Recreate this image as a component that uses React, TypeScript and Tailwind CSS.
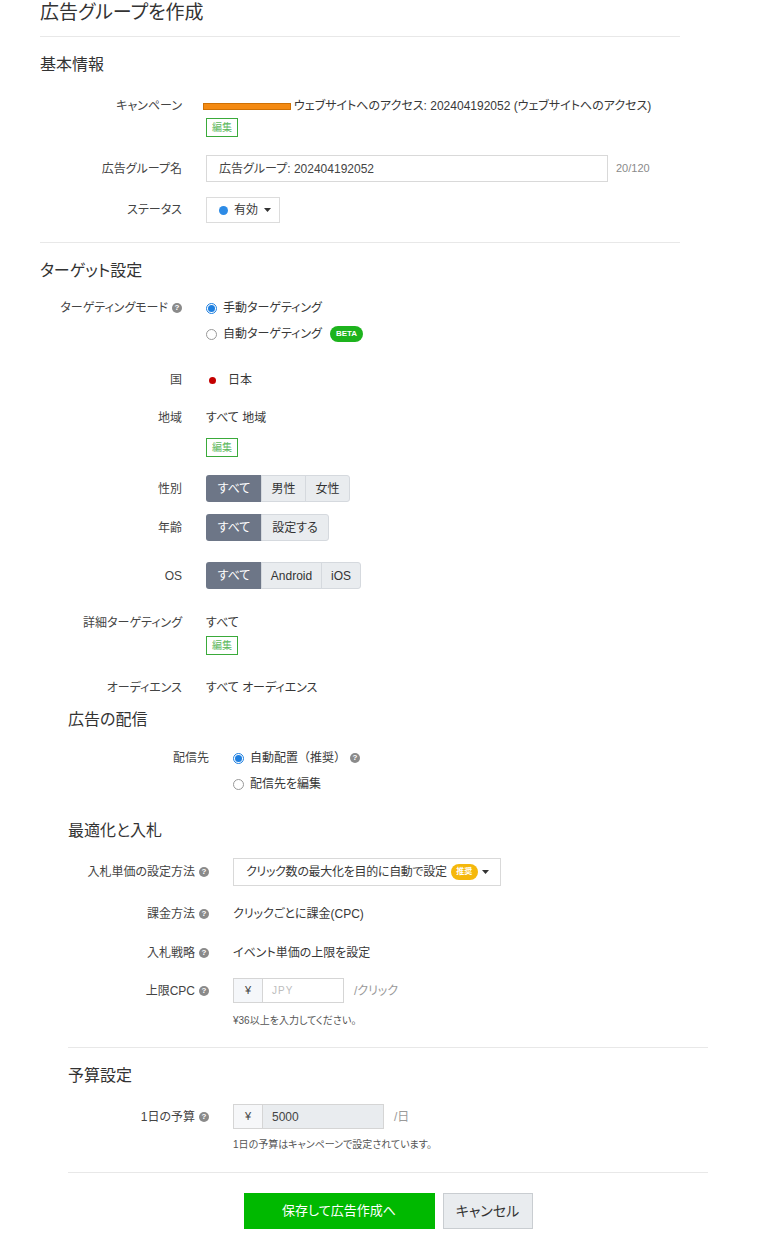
import React from 'react';

const Help = () => (
  <span className="inline-flex w-[10px] h-[10px] shrink-0 rounded-full bg-[#8a8a8a] text-white text-[8px] font-bold leading-none items-center justify-center ml-[4px]">
    ?
  </span>
);

const Caret = () => (
  <svg width="7" height="4" viewBox="0 0 7 4" className="inline-block">
    <path d="M0 0h7L3.5 4z" fill="#333" />
  </svg>
);

const EditButton = () => (
  <div className="w-[32px] h-[19px] border border-[#3aaa3a] text-[#5cb85c] text-[10px] leading-[17px] text-center bg-white">
    編集
  </div>
);

const Radio = ({ checked }: { checked?: boolean }) =>
  checked ? (
    <span className="inline-flex w-[11px] h-[11px] shrink-0 rounded-full border border-[#1e7fe0] items-center justify-center bg-white">
      <span className="w-[7px] h-[7px] rounded-full bg-[#1e7fe0]" />
    </span>
  ) : (
    <span className="inline-block w-[11px] h-[11px] shrink-0 rounded-full border border-[#999] bg-white" />
  );

type RowProps = {
  label: string;
  help?: boolean;
  labelW: string;
  children: React.ReactNode;
  className?: string;
  labelClass?: string;
  center?: boolean;
};

const Row = ({ label, help, labelW, children, className = '', labelClass = '', center }: RowProps) => (
  <div className={`flex gap-[24px] ${center ? 'items-center' : 'items-start'} ${className}`}>
    <div className={`${labelW} shrink-0 flex items-center justify-end text-[#444] leading-[18px] ${labelClass}`}>
      <span>{label}</span>
      {help && <Help />}
    </div>
    <div className="flex-1 min-w-0">{children}</div>
  </div>
);

const Segment = ({ items }: { items: { t: string; w: string }[] }) => (
  <div className="flex h-[27px]">
    {items.map((it, i) => (
      <div
        key={it.t}
        className={`${it.w} flex items-center justify-center ${
          i === 0
            ? 'bg-[#6d7687] text-white rounded-l-[3px]'
            : 'bg-[#e9ecef] text-[#333] border border-[#d5d9de] -ml-px'
        } ${i === items.length - 1 ? 'rounded-r-[3px]' : ''}`}
      >
        {it.t}
      </div>
    ))}
  </div>
);

export default function App() {
  const L1 = 'w-[142px]';
  const L2 = 'w-[141px]';
  return (
    <div className="min-h-screen bg-white text-[12px] text-[#383838] font-['Liberation_Sans','Noto_Sans_CJK_JP',sans-serif] [font-feature-settings:'palt'] pb-[30px]">
      {/* top block */}
      <div className="ml-[40px] w-[640px]">
        <div className="h-[37px] border-b border-[#e8e8e8]">
          <h1 className="text-[19px] leading-[24px] pt-px text-[#333]">広告グループを作成</h1>
        </div>

        <h2 className="mt-[16px] text-[16px] leading-[24px] text-[#333]">基本情報</h2>

        <Row label="キャンペーン" labelW={L1} className="mt-[20px]">
          <div className="flex items-center -ml-[3px] leading-[18px] whitespace-nowrap">
            <span className="inline-block w-[88px] h-[7px] bg-[#f48a12] border border-[#cf7104]" />
            <span className="ml-[3px]">ウェブサイトへのアクセス: 202404192052 (ウェブサイトへのアクセス)</span>
          </div>
          <div className="mt-[3px]">
            <EditButton />
          </div>
        </Row>

        <Row label="広告グループ名" labelW={L1} center className="mt-[18px]">
          <div className="flex items-center">
            <div className="w-[402px] h-[27px] border border-[#d9d9d9] flex items-center pl-[12px] text-[#444]">
              広告グループ: 202404192052
            </div>
            <span className="ml-[8px] text-[11px] text-[#8a8a8a]">20/120</span>
          </div>
        </Row>

        <Row label="ステータス" labelW={L1} center className="mt-[15px]">
          <div className="w-[74px] h-[26px] border border-[#dcdcdc] flex items-center pl-[12px] gap-[6px]">
            <span className="w-[9px] h-[9px] rounded-full bg-[#2d8be6]" />
            <span>有効</span>
            <Caret />
          </div>
        </Row>

        <div className="mt-[19px] border-t border-[#e8e8e8]" />

        <h2 className="mt-[16px] text-[16px] leading-[24px] text-[#333]">ターゲット設定</h2>

        <Row label="ターゲティングモード" help labelW={L1} className="mt-[16px]">
          <div className="flex items-center gap-[6px] leading-[18px]">
            <Radio checked />
            <span>手動ターゲティング</span>
          </div>
          <div className="flex items-center gap-[6px] leading-[18px] mt-[8px]">
            <Radio />
            <span>自動ターゲティング</span>
            <span className="ml-[2px] h-[16px] px-[6px] rounded-full bg-[#1db31d] text-white text-[8px] font-bold flex items-center">
              BETA
            </span>
          </div>
        </Row>

        <Row label="国" labelW={L1} className="mt-[28px]">
          <div className="flex items-center gap-[12px] leading-[18px] pl-[3px]">
            <span className="w-[7px] h-[7px] rounded-full bg-[#c40000]" />
            <span>日本</span>
          </div>
        </Row>

        <Row label="地域" labelW={L1} className="mt-[20px]">
          <div className="leading-[18px]">すべて 地域</div>
          <div className="mt-[11px]">
            <EditButton />
          </div>
        </Row>

        <Row label="性別" labelW={L1} center className="mt-[18px]">
          <Segment
            items={[
              { t: 'すべて', w: 'w-[56px]' },
              { t: '男性', w: 'w-[45px]' },
              { t: '女性', w: 'w-[45px]' },
            ]}
          />
        </Row>

        <Row label="年齢" labelW={L1} center className="mt-[12px]">
          <Segment
            items={[
              { t: 'すべて', w: 'w-[56px]' },
              { t: '設定する', w: 'w-[68px]' },
            ]}
          />
        </Row>

        <Row label="OS" labelW={L1} center className="mt-[21px]">
          <Segment
            items={[
              { t: 'すべて', w: 'w-[56px]' },
              { t: 'Android', w: 'w-[61px]' },
              { t: 'iOS', w: 'w-[40px]' },
            ]}
          />
        </Row>

        <Row label="詳細ターゲティング" labelW={L1} className="mt-[25px]">
          <div className="leading-[18px]">すべて</div>
          <div className="mt-[4px]">
            <EditButton />
          </div>
        </Row>

        <Row label="オーディエンス" labelW={L1} className="mt-[24px]">
          <div className="leading-[18px]">すべて オーディエンス</div>
        </Row>
      </div>

      {/* lower block */}
      <div className="ml-[68px] w-[640px]">
        <h2 className="mt-[11px] text-[16px] leading-[24px] text-[#333]">広告の配信</h2>

        <Row label="配信先" labelW={L2} className="mt-[17px]">
          <div className="flex items-center gap-[6px] leading-[18px]">
            <Radio checked />
            <span className="flex items-center [font-feature-settings:normal]">
              自動配置（推奨）
              <Help />
            </span>
          </div>
          <div className="flex items-center gap-[6px] leading-[18px] mt-[8px]">
            <Radio />
            <span>配信先を編集</span>
          </div>
        </Row>

        <h2 className="mt-[26px] text-[16px] leading-[24px] text-[#333]">最適化と入札</h2>

        <Row label="入札単価の設定方法" help labelW={L2} center className="mt-[15px]">
          <div className="w-[268px] h-[28px] border border-[#d9d9d9] flex items-center pl-[12px] pr-[11px] whitespace-nowrap">
            <span className="tracking-[-0.3px]">クリック数の最大化を目的に自動で設定</span>
            <span className="ml-[4px] h-[16px] w-[27px] shrink-0 rounded-full bg-[#f5b80c] text-white text-[8px] font-bold flex items-center justify-center">
              推奨
            </span>
            <span className="ml-auto flex">
              <Caret />
            </span>
          </div>
        </Row>

        <Row label="課金方法" help labelW={L2} className="mt-[19px]">
          <div className="leading-[18px]">クリックごとに課金(CPC)</div>
        </Row>

        <Row label="入札戦略" help labelW={L2} className="mt-[21px]">
          <div className="leading-[18px]">イベント単価の上限を設定</div>
        </Row>

        <Row label="上限CPC" help labelW={L2} labelClass="mt-[4px]" className="mt-[16px]">
          <div className="flex items-center">
            <div className="w-[111px] h-[25px] border border-[#d5d5d5] flex">
              <div className="w-[29px] bg-[#f5f7fa] border-r border-[#d5d5d5] flex items-center justify-center text-[11px] text-[#444]">
                ¥
              </div>
              <div className="flex-1 flex items-center pl-[9px] text-[10px] tracking-[1px] text-[#bdbdbd]">JPY</div>
            </div>
            <span className="ml-[10px] text-[#9a9a9a]">/クリック</span>
          </div>
          <div className="mt-[11px] text-[10px] leading-[14px] text-[#555]">¥36以上を入力してください。</div>
        </Row>

        <div className="mt-[19px] border-t border-[#e8e8e8]" />

        <h2 className="mt-[16px] text-[16px] leading-[24px] text-[#333]">予算設定</h2>

        <Row label="1日の予算" help labelW={L2} center className="mt-[16px]">
          <div className="flex items-center">
            <div className="w-[151px] h-[25px] border border-[#d5d5d5] flex">
              <div className="w-[29px] bg-[#f6f7f9] border-r border-[#d5d5d5] flex items-center justify-center text-[11px] text-[#444]">
                ¥
              </div>
              <div className="flex-1 bg-[#e9ecef] flex items-center pl-[9px] text-[#444]">5000</div>
            </div>
            <span className="ml-[10px] text-[#9a9a9a]">/日</span>
          </div>
        </Row>
        <div className="ml-[165px] mt-[9px] text-[10px] leading-[14px] text-[#555]">
          1日の予算はキャンペーンで設定されています。
        </div>

        <div className="mt-[20px] border-t border-[#e8e8e8]" />

        <div className="mt-[20px] flex justify-center gap-[8px]">
          <button className="w-[191px] h-[36px] bg-[#00b900] text-white text-[13px]">保存して広告作成へ</button>
          <button className="w-[90px] h-[36px] bg-[#e9ecef] border border-[#c9cdd1] text-[#333] text-[14px]">
            キャンセル
          </button>
        </div>
      </div>
    </div>
  );
}
